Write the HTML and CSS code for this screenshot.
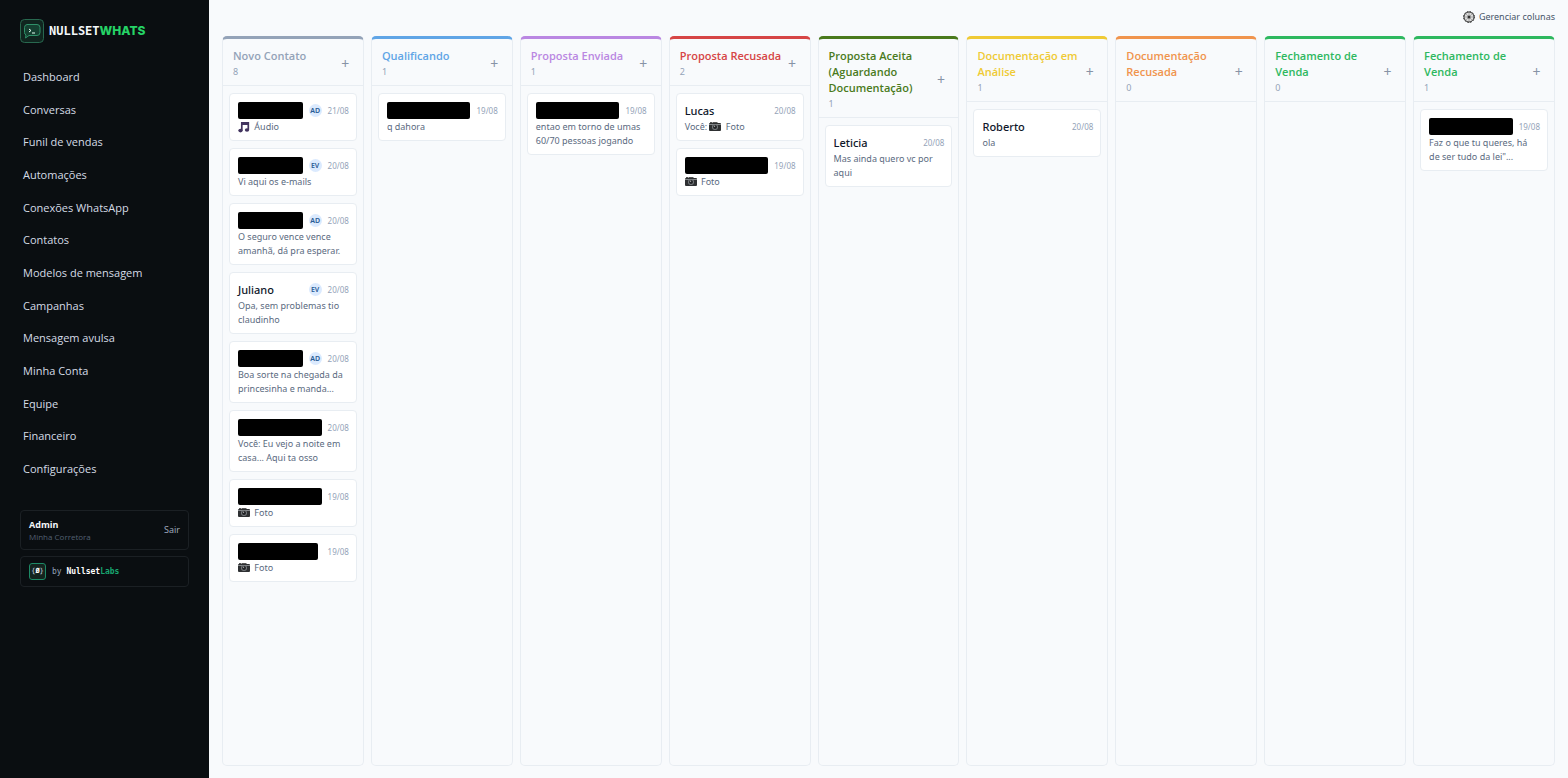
FILE: index.html
```html
<!DOCTYPE html>
<html lang="pt-BR">
<head>
<meta charset="utf-8">
<meta name="viewport" content="width=device-width, initial-scale=1">
<title>NullsetWhats</title>
<link rel="stylesheet" href="styles.css">
</head>
<body>
<svg class="sprite" aria-hidden="true">
  <symbol id="camera" viewBox="0 0 12 12">
    <path d="M1 1h2v1H1zM4 1h4l1 1H3z" fill="#555"/>
    <rect x="0" y="2" width="12" height="8" rx="1" fill="#2e3032"/>
    <rect x="0" y="3" width="12" height="1" fill="#85888a"/>
    <circle cx="6" cy="6" r="3" fill="#777b7e"/>
    <circle cx="6" cy="6" r="2" fill="#202225"/>
    <circle cx="5.5" cy="5.3" r=".7" fill="#aaa"/>
  </symbol>
  <symbol id="music" viewBox="0 0 12 12">
    <path d="M3.800 9.500V1.800h6.500v7M3.800 3.200h6.500" fill="none" stroke="#42345f" stroke-width="1.700"/>
    <ellipse cx="2.500" cy="9.600" rx="2.200" ry="1.800" fill="#42345f"/>
    <ellipse cx="9" cy="9" rx="2.200" ry="1.800" fill="#42345f"/>
  </symbol>
</svg>
<div class="app">
  <aside class="sidebar">
    <div class="brand">
      <svg class="brand-icon" viewBox="0 0 24 24" aria-hidden="true">
        <rect x=".5" y=".5" width="23" height="23" rx="4" fill="#10251f" stroke="#28684f"/>
        <path d="M7 5.500h10a3 3 0 0 1 3 3v5a3 3 0 0 1-3 3H9l-3.500 2.500.500-3a3 3 0 0 1-1.500-2.500v-5a3 3 0 0 1 2.500-3z" fill="#154031" stroke="#2f9169"/>
        <path d="M9 10l2 1.500-2 1.500M12 14h3" fill="none" stroke="#e8fff4"/>
      </svg>
      <span class="brand-name">NULLSET<b>WHATS</b></span>
    </div>
    <nav class="nav">
      <a href="#">Dashboard</a>
      <a href="#">Conversas</a>
      <a href="#">Funil de vendas</a>
      <a href="#">Automações</a>
      <a href="#">Conexões WhatsApp</a>
      <a href="#">Contatos</a>
      <a href="#">Modelos de mensagem</a>
      <a href="#">Campanhas</a>
      <a href="#">Mensagem avulsa</a>
      <a href="#">Minha Conta</a>
      <a href="#">Equipe</a>
      <a href="#">Financeiro</a>
      <a href="#">Configurações</a>
    </nav>
    <div class="user box">
      <div>
        <div class="user-name">Admin</div>
        <div class="user-org">Minha Corretora</div>
      </div>
      <button class="logout" type="button">Sair</button>
    </div>
    <a class="labs box" href="#">
      <span class="labs-icon">{<b>Ø</b>}</span>
      <span>by <b>Nullset<em>Labs</em></b></span>
    </a>
  </aside>

  <main class="main">
    <div class="toolbar">
      <button class="manage" type="button">
        <svg class="gear" viewBox="0 0 12 12" aria-hidden="true">
          <circle cx="6" cy="6" r="5" fill="#ddd" stroke="#333" stroke-width="1"/>
          <circle cx="6" cy="6" r="5.500" fill="none" stroke="#333" stroke-width="1" stroke-dasharray="1.440 1.440"/>
          <path d="M6 1.500v9M1.500 6h9M2.800 2.800l6.400 6.400M9.200 2.800l-6.400 6.400" stroke="#888" stroke-width=".6"/>
          <circle cx="6" cy="6" r="1.500" fill="#333"/>
        </svg>
        Gerenciar colunas
      </button>
    </div>
    <div class="board">
      <section class="column slate">
        <header><div><h2>Novo Contato</h2><p>8</p></div><button type="button">+</button></header>
        <div class="cards">
          <article class="card"><div class="top"><span class="mask"></span><span class="badge">AD</span><time>21/08</time></div><p><svg class="emoji"><use href="#music"/></svg> Áudio</p></article>
          <article class="card"><div class="top"><span class="mask"></span><span class="badge">EV</span><time>20/08</time></div><p>Vi aqui os e-mails</p></article>
          <article class="card"><div class="top"><span class="mask"></span><span class="badge">AD</span><time>20/08</time></div><p>O seguro vence vence<br>amanhã, dá pra esperar.</p></article>
          <article class="card"><div class="top"><h3>Juliano</h3><span class="badge">EV</span><time>20/08</time></div><p>Opa, sem problemas tio<br>claudinho</p></article>
          <article class="card"><div class="top"><span class="mask"></span><span class="badge">AD</span><time>20/08</time></div><p>Boa sorte na chegada da<br>princesinha e manda...</p></article>
          <article class="card"><div class="top"><span class="mask"></span><time>20/08</time></div><p>Você: Eu vejo a noite em<br>casa... Aqui ta osso</p></article>
          <article class="card"><div class="top"><span class="mask"></span><time>19/08</time></div><p><svg class="emoji"><use href="#camera"/></svg> Foto</p></article>
          <article class="card"><div class="top"><span class="mask short"></span><time>19/08</time></div><p><svg class="emoji"><use href="#camera"/></svg> Foto</p></article>
        </div>
      </section>
      <section class="column blue">
        <header><div><h2>Qualificando</h2><p>1</p></div><button type="button">+</button></header>
        <div class="cards">
          <article class="card"><div class="top"><span class="mask"></span><time>19/08</time></div><p>q dahora</p></article>
        </div>
      </section>
      <section class="column purple">
        <header><div><h2>Proposta Enviada</h2><p>1</p></div><button type="button">+</button></header>
        <div class="cards">
          <article class="card"><div class="top"><span class="mask"></span><time>19/08</time></div><p>entao em torno de umas<br>60/70 pessoas jogando</p></article>
        </div>
      </section>
      <section class="column red">
        <header><div><h2>Proposta Recusada</h2><p>2</p></div><button type="button">+</button></header>
        <div class="cards">
          <article class="card"><div class="top"><h3>Lucas</h3><time>20/08</time></div><p>Você: <svg class="emoji"><use href="#camera"/></svg> Foto</p></article>
          <article class="card"><div class="top"><span class="mask"></span><time>19/08</time></div><p><svg class="emoji"><use href="#camera"/></svg> Foto</p></article>
        </div>
      </section>
      <section class="column olive">
        <header><div><h2>Proposta Aceita (Aguardando Documentação)</h2><p>1</p></div><button type="button">+</button></header>
        <div class="cards">
          <article class="card"><div class="top"><h3>Leticia</h3><time>20/08</time></div><p>Mas ainda quero vc por<br>aqui</p></article>
        </div>
      </section>
      <section class="column yellow">
        <header><div><h2>Documentação em Análise</h2><p>1</p></div><button type="button">+</button></header>
        <div class="cards">
          <article class="card"><div class="top"><h3>Roberto</h3><time>20/08</time></div><p>ola</p></article>
        </div>
      </section>
      <section class="column orange">
        <header><div><h2>Documentação Recusada</h2><p>0</p></div><button type="button">+</button></header>
      </section>
      <section class="column green">
        <header><div><h2>Fechamento de Venda</h2><p>0</p></div><button type="button">+</button></header>
      </section>
      <section class="column green">
        <header><div><h2>Fechamento de Venda</h2><p>1</p></div><button type="button">+</button></header>
        <div class="cards">
          <article class="card"><div class="top"><span class="mask"></span><time>19/08</time></div><p>Faz o que tu queres, há<br>de ser tudo da lei"...</p></article>
        </div>
      </section>
    </div>
  </main>
</div>
</body>
</html>
```
FILE: styles.css
```css
* { box-sizing: border-box; }
body, h2, h3, p { margin: 0; }
body {
  font-family: "Noto Sans", "Open Sans", sans-serif;
  font-size: 11px;
  color: #0f172a;
  background: #f8fafc;
}
button {
  padding: 0;
  border: 0;
  background: none;
  font: inherit;
  cursor: pointer;
}
a { color: inherit; text-decoration: none; }
.sprite { display: none; }

.app { display: flex; min-height: 100vh; }

.sidebar {
  flex: 0 0 209px;
  padding: 19px 20px;
  background: #0a0e11;
  color: #d5dce6;
  font-family: "Open Sans", "Noto Sans", sans-serif;
}
.brand { display: flex; align-items: center; gap: 5px; }
.brand-icon { width: 24px; height: 24px; flex: none; }
.brand-name {
  font: bold 12px/24px "DejaVu Sans Mono", monospace;
  color: #f4f7fa;
  white-space: nowrap;
}
.brand-name b { font: 800 12px/24px Inter, sans-serif; color: #25d366; }
.nav {
  display: flex;
  flex-direction: column;
  justify-content: space-between;
  min-height: 424px;
  margin: 18px 0 25px;
}
.nav a { padding: 8px 3px; line-height: 16px; }
.box { display: flex; align-items: center; border: 1px solid #1b2024; border-radius: 4px; padding: 0 8px; }
.user { justify-content: space-between; min-height: 40px; margin-bottom: 6px; }
.user-name { font-size: 9px; font-weight: 700; line-height: 13px; color: #f4f7fa; }
.user-org { font-size: 8px; line-height: 11px; color: #536071; }
.logout { font-size: 9px; line-height: 12px; color: #a3afc0; }
.labs { gap: 6px; min-height: 31px; font: 8px/16px "DejaVu Sans Mono", monospace; color: #94a3b8; }
.labs b { color: #fff; }
.labs em { font-style: normal; color: #18a56f; }
.labs-icon {
  width: 17px;
  height: 17px;
  border: 1px solid #1d8a66;
  border-radius: 3px;
  background: #14241f;
  color: #cbd5e1;
  font-size: 7px;
  line-height: 15px;
  text-align: center;
}

.main {
  flex: 1;
  min-width: 0;
  display: flex;
  flex-direction: column;
  padding: 9px 13px 12px;
}
.toolbar { display: flex; justify-content: flex-end; margin-bottom: 11px; }
.manage { display: flex; align-items: center; gap: 4px; font-size: 9px; line-height: 16px; color: #475569; }
.gear { width: 12px; height: 12px; }

.board { flex: 1; display: grid; grid-template-columns: repeat(9, minmax(0, 1fr)); gap: 7px; }
.column {
  border: 1px solid #e8edf2;
  border-top: 3px solid var(--accent);
  border-radius: 5px;
}
.slate { --accent: #94a3b8; }
.blue { --accent: #60a5e6; }
.purple { --accent: #ba87e2; }
.red { --accent: #d64545; }
.olive { --accent: #4a7a1c; }
.yellow { --accent: #efca35; }
.orange { --accent: #f0944d; }
.green { --accent: #2eb85f; }
.column header {
  display: flex;
  align-items: center;
  justify-content: space-between;
  padding: 9px 13px 6px 10px;
  border-bottom: 1px solid #e8edf2;
}
.column h2 { font-family: "Open Sans", "Noto Sans", sans-serif; font-size: 11px; font-weight: 600; line-height: 16px; color: var(--accent); }
.column header p { font-size: 9px; line-height: 15px; color: #94a3b8; }
.column header button { flex: none; width: 9px; font-size: 14px; line-height: 16px; color: #8793a6; }

.cards { display: flex; flex-direction: column; gap: 7px; padding: 7px 6px; }
.card {
  padding: 8px 7px 6px 8px;
  border: 1px solid #e8edf2;
  border-radius: 4px;
  background: #fff;
}
.top { display: flex; align-items: center; gap: 6px; height: 17px; margin-bottom: 1px; }
.top h3 { flex: 1; font-size: 11px; font-weight: 500; line-height: 17px; }
.mask { flex: 1; height: 17px; border-radius: 2px; background: #000; }
.mask.short { margin-right: 4px; }
.badge {
  width: 13px;
  height: 13px;
  border-radius: 50%;
  background: #dbeafe;
  color: #285a94;
  font-size: 7px;
  font-weight: 600;
  line-height: 13px;
  text-align: center;
}
.top time { font-size: 8px; line-height: 14px; color: #94a3b8; }
.card p { font-size: 9px; line-height: 14px; color: #5a6a80; white-space: nowrap; }
.emoji { width: 12px; height: 12px; margin-right: 2px; vertical-align: -3px; }
```
